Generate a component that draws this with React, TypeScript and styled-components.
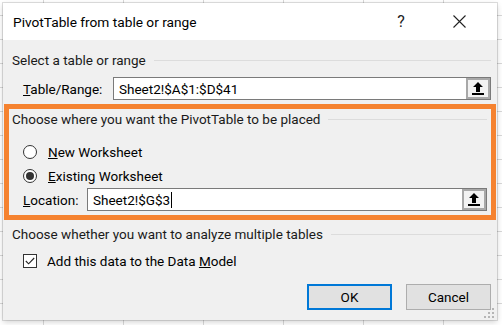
import React from 'react';
import styled, { createGlobalStyle } from 'styled-components';

const GlobalStyle = createGlobalStyle`
  html, body {
    margin: 0;
    padding: 0;
    width: 502px;
    height: 325px;
    overflow: hidden;
    background-color: #ffffff;
    background-image:
      linear-gradient(to right, #d8d8d8 1px, transparent 1px),
      linear-gradient(to bottom, #d8d8d8 1px, transparent 1px);
    background-size: 80px 24px;
    background-position: 43px 15px;
    font-family: "Segoe UI", Roboto, "Noto Sans", sans-serif;
    color: #000;
  }
`;

const Frame = styled.div`
  padding: 3px 5px 5px 3px;
`;

const Dialog = styled.div`
  position: relative;
  width: 494px;
  height: 317px;
  background: #f0f0f0;
  box-shadow: 0 0 0 1px rgba(0, 0, 0, 0.12), 0 2px 6px rgba(0, 0, 0, 0.18);
  display: flex;
  flex-direction: column;
`;

const TitleBar = styled.div`
  height: 37px;
  flex-shrink: 0;
  background: #ffffff;
  display: flex;
  align-items: center;
  padding-left: 10px;
`;

const Title = styled.div`
  flex: 1;
  font-size: 13.7px;
  color: #000;
`;

const TitleButton = styled.div<{ $w: number }>`
  width: ${(p) => p.$w}px;
  height: 37px;
  display: flex;
  align-items: center;
  justify-content: center;
  font-size: 16px;
  color: #222;
`;

const Body = styled.div`
  flex: 1;
  padding: 10px 6px 0 9px;
  display: flex;
  flex-direction: column;
`;

const GroupHeader = styled.div<{ $top?: number }>`
  height: 20px;
  flex-shrink: 0;
  margin-top: ${(p) => p.$top ?? 0}px;
  display: flex;
  align-items: center;
  font-size: 13.5px;
  color: #1a1a1a;
  gap: 8px;

  &::after {
    content: '';
    flex: 1;
    height: 1px;
    background: #dcdcdc;
    margin-top: 1px;
  }
`;

const Row = styled.div<{ $top: number }>`
  display: flex;
  align-items: center;
  min-height: 20px;
  margin-top: ${(p) => p.$top}px;
  padding-left: 11px;
  font-size: 13.5px;
`;

const Label = styled.div<{ $w: number }>`
  width: ${(p) => p.$w}px;
  flex-shrink: 0;
`;

const RefField = styled.div`
  flex: 1;
  height: 23px;
  box-sizing: border-box;
  border: 1px solid #7a7a7a;
  background: #fff;
  display: flex;
  align-items: center;
  padding-left: 5px;
  font-size: 13.5px;
`;

const FieldText = styled.div`
  flex: 1;
  display: flex;
  align-items: center;
`;

const Caret = styled.span`
  display: inline-block;
  width: 1px;
  height: 16px;
  background: #000;
  margin-left: 1px;
`;

const RefButton = styled.div`
  width: 24px;
  height: 21px;
  box-sizing: border-box;
  border: 2px solid #a8a8a8;
  background: #f2f2f2;
  display: flex;
  align-items: center;
  justify-content: center;
`;

const Highlight = styled.div`
  margin: 4px -5px 0 -8px;
  border: 5px solid #f5822f;
  padding: 0 4px 4px 3px;
  display: flex;
  flex-direction: column;
`;

const Radio = styled.span<{ $on?: boolean }>`
  width: 14px;
  height: 14px;
  box-sizing: border-box;
  border: 1px solid #333;
  border-radius: 50%;
  background: #fff;
  display: inline-flex;
  align-items: center;
  justify-content: center;
  margin-right: 11px;

  &::after {
    content: '';
    width: 8px;
    height: 8px;
    border-radius: 50%;
    background: ${(p) => (p.$on ? '#333' : 'transparent')};
  }
`;

const Check = styled.span`
  width: 14px;
  height: 14px;
  box-sizing: border-box;
  border: 1px solid #333;
  background: #fff;
  display: inline-flex;
  align-items: center;
  justify-content: center;
  margin-right: 10px;
`;

const Buttons = styled.div`
  margin-top: 13px;
  display: flex;
  justify-content: flex-end;
  gap: 14px;
`;

const Button = styled.div<{ $primary?: boolean }>`
  width: 85px;
  height: 26px;
  box-sizing: border-box;
  border: ${(p) => (p.$primary ? '2px solid #0078d7' : '1px solid #adadad')};
  background: #e1e1e1;
  display: flex;
  align-items: center;
  justify-content: center;
  font-size: 13.5px;
`;

const Grip = styled.svg`
  position: absolute;
  right: 3px;
  bottom: 2px;
`;

const UploadIcon = () => (
  <svg width="12" height="14" viewBox="0 0 12 14">
    <polygon points="6,0 11,5 8,5 8,10 4,10 4,5 1,5" fill="#000" />
    <rect x="0" y="11" width="12" height="2" fill="#000" />
  </svg>
);

export default function App() {
  return (
    <>
      <GlobalStyle />
      <Frame>
        <Dialog>
          <TitleBar>
            <Title>PivotTable from table or range</Title>
            <TitleButton $w={40}>?</TitleButton>
            <TitleButton $w={76}>
              <svg width="13" height="13" viewBox="0 0 13 13">
                <path d="M0.5 0.5 L12.5 12.5 M12.5 0.5 L0.5 12.5" stroke="#222" strokeWidth="1.1" />
              </svg>
            </TitleButton>
          </TitleBar>
          <Body>
            <GroupHeader>Select a table or range</GroupHeader>
            <Row $top={7}>
              <Label $w={90}>
                <u>T</u>able/Range:
              </Label>
              <RefField>
                <FieldText>Sheet2!$A$1:$D$41</FieldText>
                <RefButton>
                  <UploadIcon />
                </RefButton>
              </RefField>
            </Row>
            <Highlight>
              <GroupHeader>Choose where you want the PivotTable to be placed</GroupHeader>
              <Row $top={13}>
                <Radio />
                <span>
                  <u>N</u>ew Worksheet
                </span>
              </Row>
              <Row $top={4}>
                <Radio $on />
                <span>
                  <u>E</u>xisting Worksheet
                </span>
              </Row>
              <Row $top={2}>
                <Label $w={64}>
                  <u>L</u>ocation:
                </Label>
                <RefField>
                  <FieldText>
                    Sheet2!$G$3
                    <Caret />
                  </FieldText>
                  <RefButton>
                    <UploadIcon />
                  </RefButton>
                </RefField>
              </Row>
            </Highlight>
            <GroupHeader $top={4}>Choose whether you want to analyze multiple tables</GroupHeader>
            <Row $top={7}>
              <Check>
                <svg width="10" height="8" viewBox="0 0 10 8">
                  <path d="M0.8 4 L3.6 6.8 L9.2 1" fill="none" stroke="#222" strokeWidth="1.1" />
                </svg>
              </Check>
              <span>
                Add this data to the Data <u>M</u>odel
              </span>
            </Row>
            <Buttons>
              <Button $primary>OK</Button>
              <Button>Cancel</Button>
            </Buttons>
          </Body>
          <Grip width="10" height="10" viewBox="0 0 10 10">
            {[
              [8, 0],
              [4, 4],
              [8, 4],
              [0, 8],
              [4, 8],
              [8, 8],
            ].map(([x, y]) => (
              <rect key={`${x}-${y}`} x={x} y={y} width="2" height="2" fill="#b5b5b5" />
            ))}
          </Grip>
        </Dialog>
      </Frame>
    </>
  );
}
